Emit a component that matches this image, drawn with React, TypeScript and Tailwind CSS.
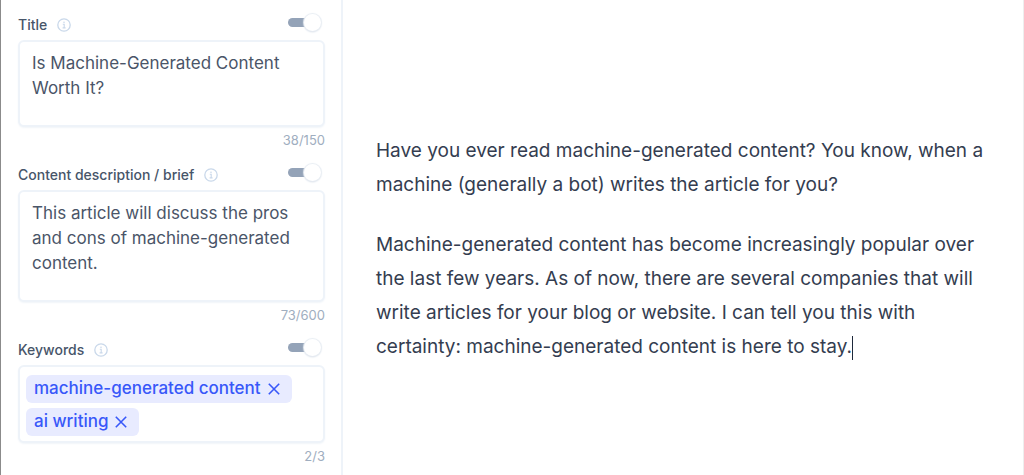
import { useState } from 'react';
import type { ReactNode } from 'react';

function InfoIcon() {
  return (
    <svg viewBox="0 0 14 14" className="size-3.5" fill="none" stroke="#c9d8ea" aria-hidden="true">
      <circle cx="7" cy="7" r="6.2" strokeWidth="1.3" />
      <path d="M5.8 6.3H7.2V9.8M5.6 9.9H8.6" strokeWidth="1.1" />
      <circle cx="7" cy="4.2" r="0.8" fill="#c9d8ea" stroke="none" />
    </svg>
  );
}

function Toggle({ label }: { label: string }) {
  return (
    <label className="relative mr-[5px] flex h-[18px] w-8 items-center">
      <input
        type="checkbox"
        defaultChecked
        aria-label={label}
        className="peer h-[9px] w-7 appearance-none rounded-full bg-[#94a3b8]"
      />
      <span className="absolute left-0 size-[17px] rounded-full bg-white shadow-[0_0_1px_1px_#e8edf3,0_1px_2px_#cbd5e1] peer-checked:left-4" />
    </label>
  );
}

function Field({
  id,
  label,
  count,
  children,
}: {
  id: string;
  label: string;
  count: string;
  children: ReactNode;
}) {
  return (
    <section>
      <div className="mb-[3px] flex h-6 items-start justify-between">
        <div className="flex h-6 items-center gap-2.5">
          <label htmlFor={id} className="text-sm font-medium text-[#475569]">
            {label}
          </label>
          <InfoIcon />
        </div>
        <Toggle label={`Use ${label}`} />
      </div>
      {children}
      <p className="mt-1 text-right text-[13px] leading-[18px] text-[#a0aec0]">{count}</p>
    </section>
  );
}

const box =
  'block w-full rounded-md border-2 border-[#eef3f9] bg-white shadow-[0_1px_2px_#f1f5f9] outline-none';
const area = 'resize-none overflow-hidden px-3 py-[9px] text-[17px] leading-[25px] text-[#4a5568]';

export default function App() {
  const [keywords, setKeywords] = useState(['machine-generated content', 'ai writing']);

  return (
    <div className="flex min-h-screen border-l border-[#8b8b8b] bg-white font-['Inter',sans-serif]">
      <aside className="flex w-[342px] shrink-0 flex-col gap-3.5 border-r-2 border-[#eef3f9] pt-[13px] pr-4 pl-[17px]">
        <Field id="title" label="Title" count="38/150">
          <textarea
            id="title"
            className={`${box} ${area} h-[87px]`}
            defaultValue="Is Machine-Generated Content Worth It?"
            spellCheck={false}
          />
        </Field>
        <Field id="brief" label="Content description / brief" count="73/600">
          <textarea
            id="brief"
            className={`${box} ${area} h-28`}
            defaultValue="This article will discuss the pros and cons of machine-generated content."
            spellCheck={false}
          />
        </Field>
        <Field id="keywords" label="Keywords" count={`${keywords.length}/3`}>
          <div className={`${box} flex min-h-[78px] flex-wrap content-start gap-[5px] px-1.5 pt-2`}>
            {keywords.map((word) => (
              <span
                key={word}
                className="flex h-7 items-center gap-[7px] rounded-md bg-[#e8ebff] pr-3 pl-2 text-[17px] font-medium text-[#3858f9]"
              >
                {word}
                <button
                  type="button"
                  aria-label={`Remove ${word}`}
                  onClick={() => setKeywords(keywords.filter((k) => k !== word))}
                >
                  <svg viewBox="0 0 12 12" className="size-3" stroke="currentColor" strokeWidth="1.6">
                    <path d="M0.8 0.8L11.2 11.2M11.2 0.8L0.8 11.2" />
                  </svg>
                </button>
              </span>
            ))}
            <input id="keywords" type="text" className="h-7 w-10 min-w-0 flex-1 outline-none" />
          </div>
        </Field>
      </aside>
      <main className="flex-1 border-r border-[#eeeeee] pt-[134px] pr-8 pl-[33px]">
        <article className="flex flex-col gap-[26px] text-[19px] leading-[34px] text-[#343d50]">
          <p>
            Have you ever read machine-generated content? You know, when a machine (generally a bot)
            writes the article for you?
          </p>
          <p>
            Machine-generated content has become increasingly popular over the last few years. As of
            now, there are several companies that will write articles for your blog or website. I can
            tell you this with certainty: machine-generated content is here to stay.
            <span className="inline-block h-6 w-px bg-[#1e293b] align-middle" />
          </p>
        </article>
      </main>
    </div>
  );
}
